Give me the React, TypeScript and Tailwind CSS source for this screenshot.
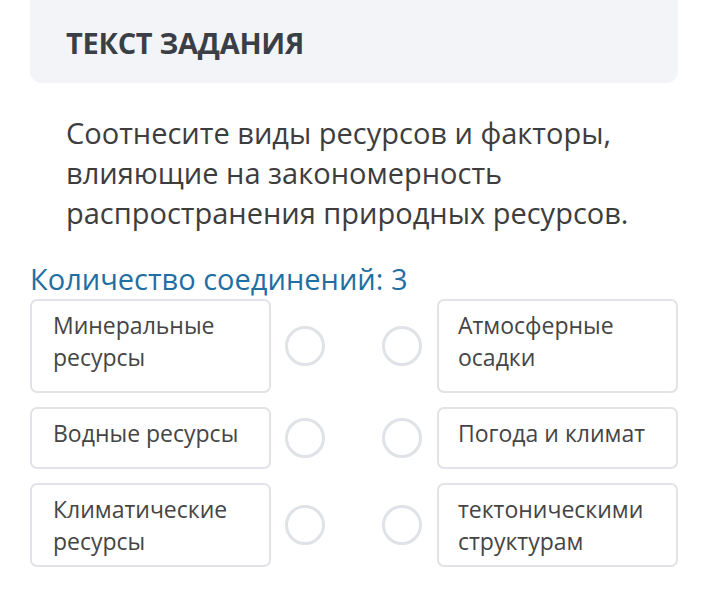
import React from 'react'

type Row = {
    left: string
    right: string
    height: string
}

const rows: Row[] = [
    { left: 'Минеральные ресурсы', right: 'Атмосферные осадки', height: 'h-[94px]' },
    { left: 'Водные ресурсы', right: 'Погода и климат', height: 'h-[62px]' },
    { left: 'Климатические ресурсы', right: 'тектоническими структурам', height: 'h-[84px]' },
]

function Card({ text, height, pad }: { text: string; height: string; pad: string }) {
    return (
        <div className={`${height} ${pad} rounded-[7px] border-2 border-[#e1e3e6] bg-white pr-2 pt-[8px] text-[23px] leading-[32px] text-[#454545]`}>
            {text}
        </div>
    )
}

function Dot() {
    return <div className="h-[40px] w-[40px] rounded-full border-[3px] border-[#dfe2e6] bg-white" />
}

export default function App() {
    return (
        <div className="w-[714px] h-[599px] bg-white pl-[30px] pr-[36px]" style={{ fontFamily: '"Open Sans", "Noto Sans", sans-serif' }}>
            <div className="flex h-[83px] items-center rounded-b-[12px] bg-[#f3f4f7] pl-[36px]">
                <h1 className="text-[29px] font-bold tracking-[-0.01em] text-[#3a3f47] pt-[2px]">ТЕКСТ ЗАДАНИЯ</h1>
            </div>

            <p className="mt-[30px] px-[36px] text-[29px] leading-[40px] text-[#3d3d3d]">
                Соотнесите виды ресурсов и факторы, влияющие на закономерность распространения природных ресурсов.
            </p>

            <div className="mt-[26px] text-[29px] leading-[40px] text-[#1f6fa3]">Количество соединений: 3</div>

            <div className="flex flex-col gap-[14px]">
                {rows.map((r) => (
                    <div key={r.left} className="grid grid-cols-[241px_1fr_241px] items-center">
                        <Card text={r.left} height={r.height} pad="pl-[21px]" />
                        <div className="flex items-center pl-[14px] gap-[57px]">
                            <Dot />
                            <Dot />
                        </div>
                        <Card text={r.right} height={r.height} pad="pl-[19px]" />
                    </div>
                ))}
            </div>
        </div>
    )
}
